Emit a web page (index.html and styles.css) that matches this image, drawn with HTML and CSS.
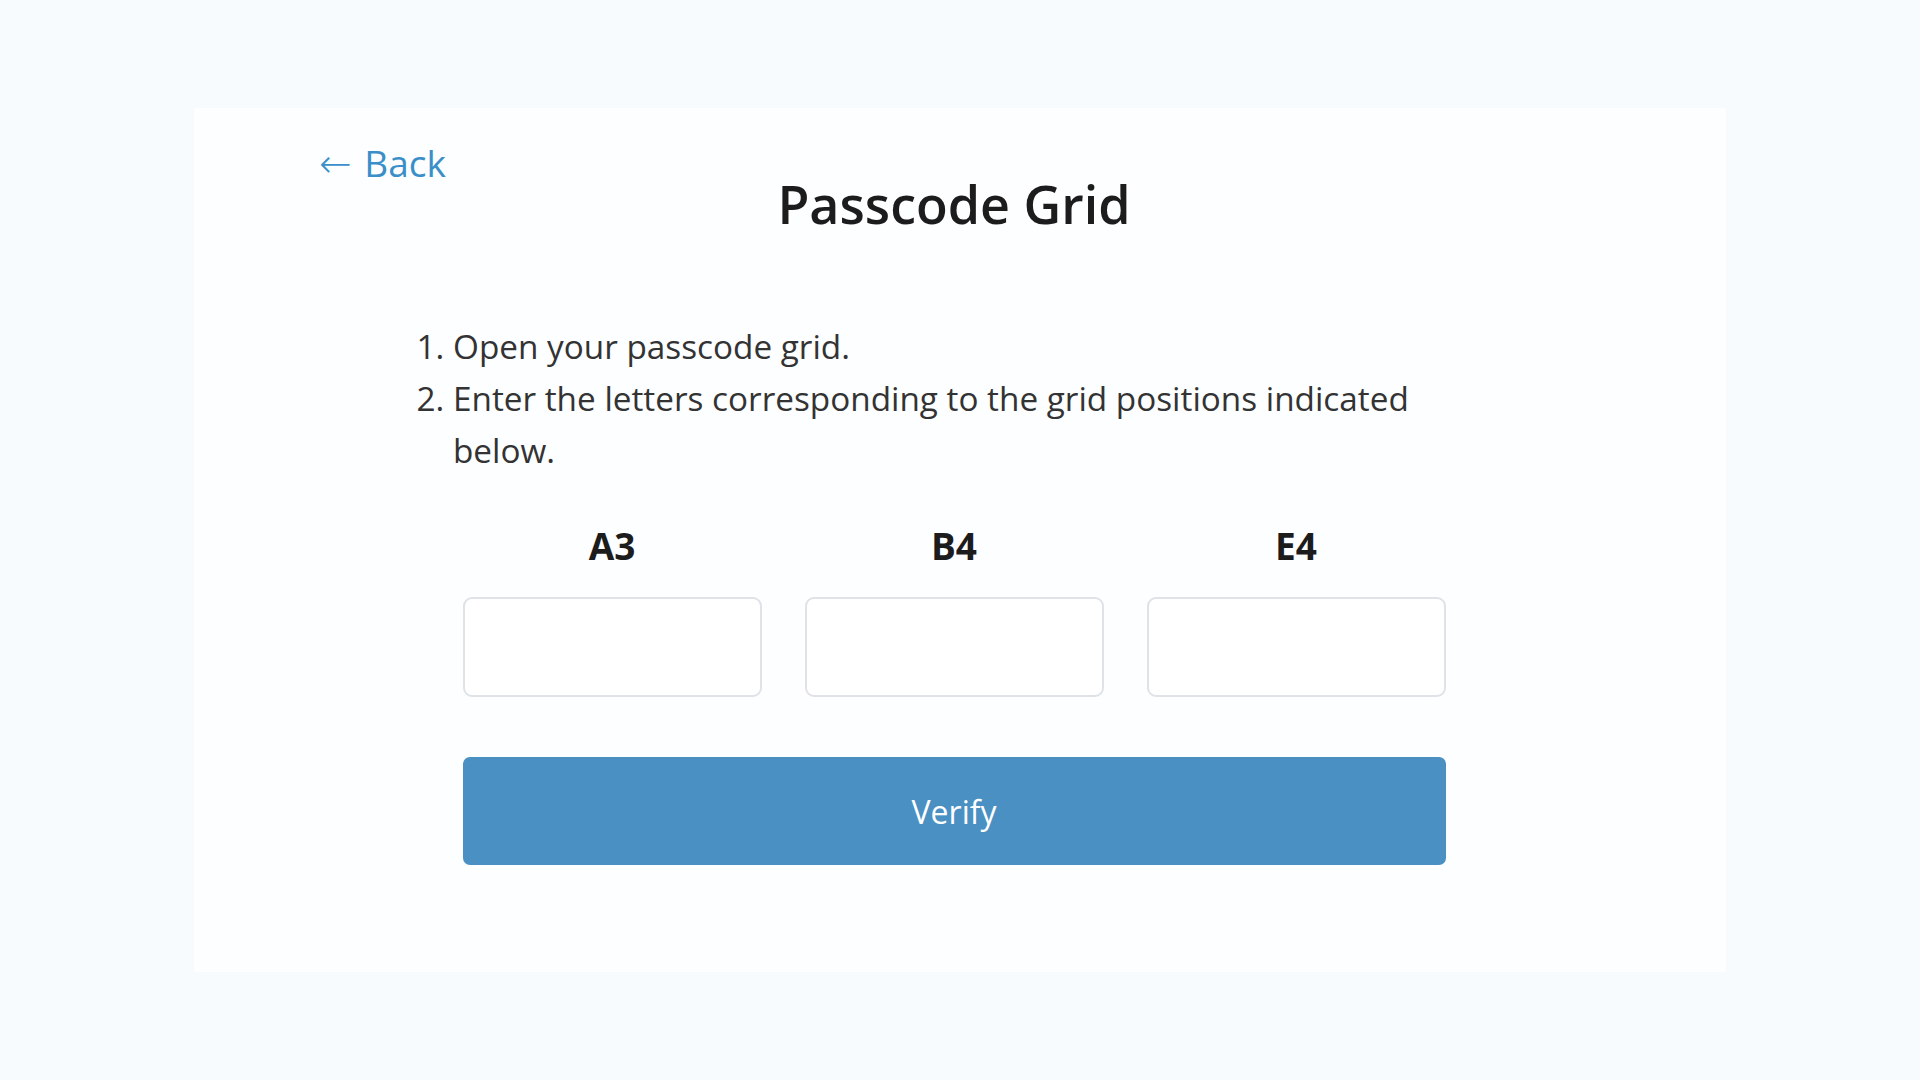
FILE: index.html
```html
<!DOCTYPE html>
<html lang="en">
  <head>
    <meta charset="UTF-8" />
    <meta name="viewport" content="width=device-width, initial-scale=1.0" />
    <title>Passcode Grid</title>
    <link rel="stylesheet" href="styles.css">
  </head>
  <body>
    <div class="wrapper">
      <a class="back-link" href="#"><span class="arrow">&larr;</span> Back</a>
      <h1 class="title">Passcode Grid</h1>
      <ol class="steps">
        <li>Open your passcode grid.</li>
        <li>Enter the letters corresponding to the grid positions indicated below.</li>
      </ol>
      <form class="grid-form">
        <div class="cells">
          <label class="cell">
            <span class="cell-name">A3</span>
            <input type="text" maxlength="1" />
          </label>
          <label class="cell">
            <span class="cell-name">B4</span>
            <input type="text" maxlength="1" />
          </label>
          <label class="cell">
            <span class="cell-name">E4</span>
            <input type="text" maxlength="1" />
          </label>
        </div>
        <button type="button" class="verify-button">Verify</button>
      </form>
    </div>
  </body>
</html>
```

FILE: styles.css
```css
* {
  margin: 0;
  padding: 0;
  box-sizing: border-box;
}
body {
  background-color: #f8fbfe;
  font-family: "Open Sans", "Noto Sans", sans-serif;
  color: #222;
}
.wrapper {
  position: relative;
  width: 1532px;
  height: 864px;
  margin: 108px auto 0;
  padding: 65px 140px 0 128px;
  background-color: #fdfeff;
}
/* 뒤로가기 링크는 제목 위에 겹쳐서 올림 */
.back-link {
  position: absolute;
  top: 31px;
  left: 125px;
  font-size: 37px;
  line-height: 48px;
  color: #3b8fc9;
  text-decoration: none;
}
.arrow {
  font-family: "DejaVu Sans", sans-serif;
  font-weight: 200;
  font-size: 39px;
  margin-right: 3px;
}
.title {
  text-align: center;
  font-size: 52px;
  line-height: 62px;
  font-weight: 600;
  color: #1c1c1c;
}
.steps {
  width: 1076px;
  margin: 85px auto 0;
  padding-left: 37px;
  font-size: 33.3px;
  line-height: 52px;
  color: #333;
}
.grid-form {
  width: 983px;
  margin: 46px auto 0;
}
.cells {
  display: grid;
  grid-template-columns: repeat(3, 1fr);
  gap: 43px;
}
.cell {
  display: flex;
  flex-direction: column;
  align-items: center;
  gap: 27px;
}
.cell-name {
  font-size: 37px;
  line-height: 48px;
  font-weight: 700;
  color: #1c1c1c;
}
.cell input {
  width: 100%;
  height: 100px;
  border: 2px solid #dfe2e7;
  border-radius: 9px;
  background: white;
  font-size: 32px;
  text-align: center;
}
.verify-button {
  display: block;
  width: 100%;
  height: 108px;
  margin-top: 60px;
  border: none;
  border-radius: 7px;
  background-color: #4a90c3;
  color: white;
  font-family: inherit;
  font-size: 32px;
  cursor: pointer;
}
```
